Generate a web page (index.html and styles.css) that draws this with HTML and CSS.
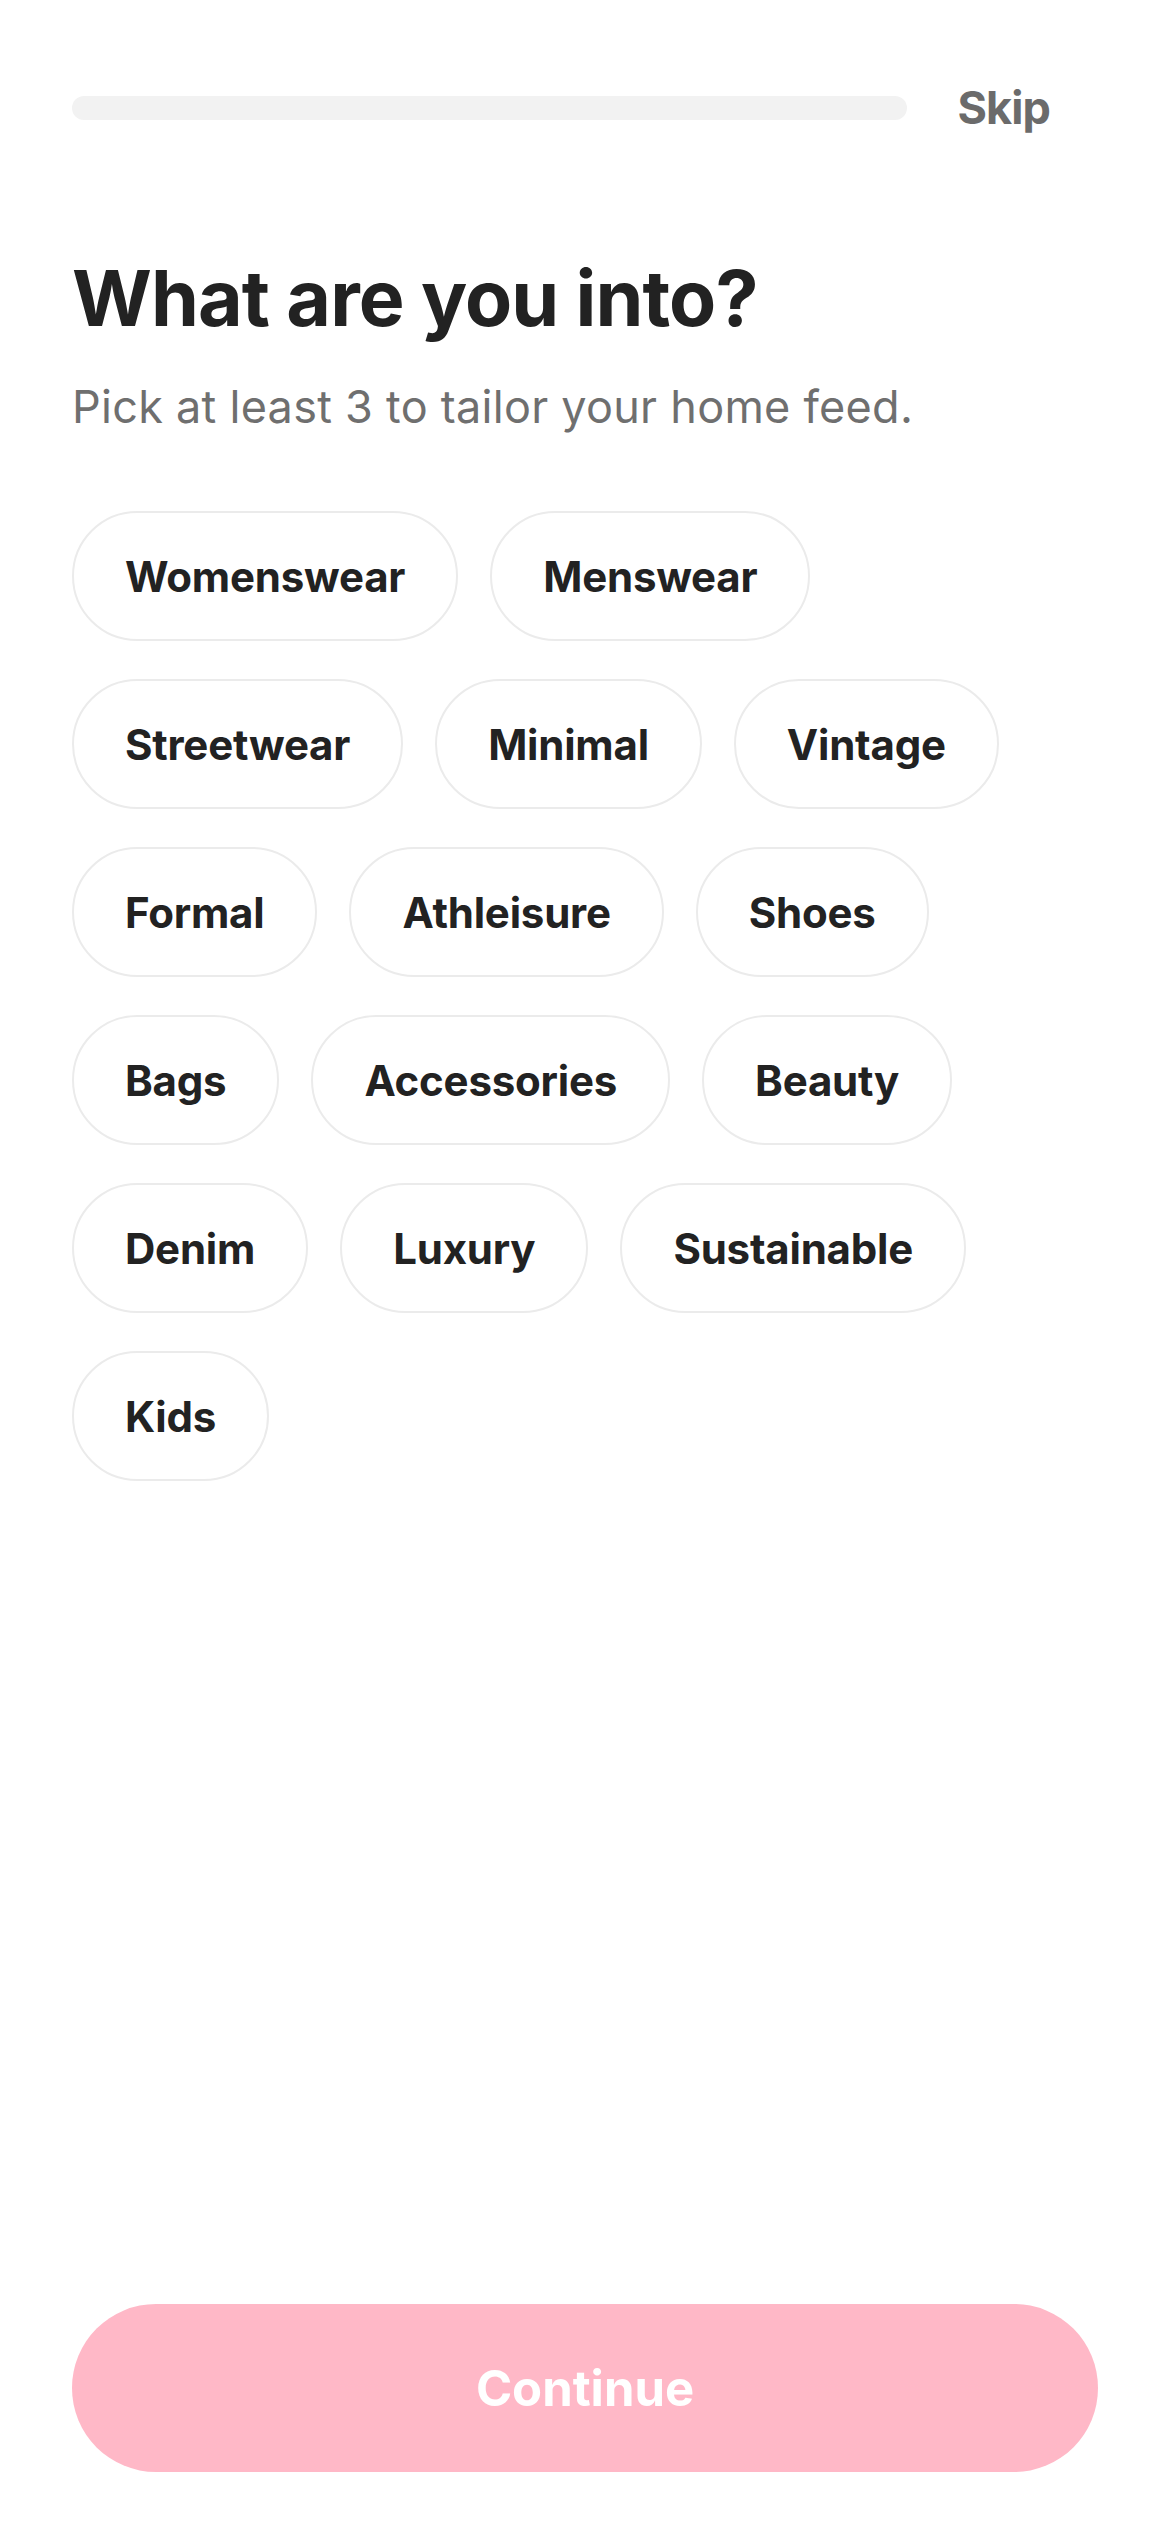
FILE: index.html
```html
<!DOCTYPE html>
<html lang="en">
<head>
  <meta charset="UTF-8" />
  <meta name="viewport" content="width=device-width, initial-scale=1.0"/>
  <title>What are you into?</title>
  <link rel="stylesheet" href="styles.css">
</head>
<body>
  <div class="top-bar">
    <div class="progress"><div class="progress-fill"></div></div>
    <button class="skip-btn">Skip</button>
  </div>

  <h1 class="title">What are you into?</h1>
  <p class="subtitle">Pick at least 3 to tailor your home feed.</p>

  <div class="chips" id="chips">
    <button class="chip">Womenswear</button>
    <button class="chip">Menswear</button>
    <button class="chip">Streetwear</button>
    <button class="chip">Minimal</button>
    <button class="chip">Vintage</button>
    <button class="chip">Formal</button>
    <button class="chip">Athleisure</button>
    <button class="chip">Shoes</button>
    <button class="chip">Bags</button>
    <button class="chip">Accessories</button>
    <button class="chip">Beauty</button>
    <button class="chip">Denim</button>
    <button class="chip">Luxury</button>
    <button class="chip">Sustainable</button>
    <button class="chip">Kids</button>
  </div>

  <button class="continue-btn" id="continueBtn" disabled>Continue</button>

  <script>
    const chips = document.querySelectorAll('.chip');
    const continueBtn = document.getElementById('continueBtn');

    chips.forEach(chip => {
      chip.addEventListener('click', () => {
        chip.classList.toggle('selected');
        const count = document.querySelectorAll('.chip.selected').length;
        continueBtn.disabled = count < 3;
      });
    });
  </script>
</body>
</html>
```

FILE: styles.css
```css
* {
  box-sizing: border-box;
}
body {
  margin: 0;
  min-height: 100vh;
  padding: 0 72px 60px;
  display: flex;
  flex-direction: column;
  background-color: #fff;
  color: #222;
  font-family: Inter, 'Noto Sans', sans-serif;
}
button {
  font-family: inherit;
  cursor: pointer;
}
.top-bar {
  display: flex;
  align-items: center;
  gap: 50px;
  padding-top: 84px;
  height: 132px;
}
.progress {
  flex: 1;
  height: 24px;
  border-radius: 12px;
  background-color: #f2f2f2;
  overflow: hidden;
}
.progress-fill {
  width: 0;
  height: 100%;
  background-color: #ff8fa6;
}
.skip-btn {
  background: none;
  border: none;
  padding: 0;
  margin-right: 48px;
  font-size: 45px;
  line-height: 48px;
  font-weight: 700;
  color: #6b6b6b;
  letter-spacing: -0.02em;
}
.title {
  margin: 120px 0 0;
  font-size: 77px;
  line-height: 92px;
  font-weight: 700;
  letter-spacing: -0.012em;
  color: #222;
}
.subtitle {
  margin: 35px 0 0;
  font-size: 45px;
  line-height: 56px;
  color: #6f6f6f;
  letter-spacing: 0.006em;
}
.chips {
  margin-top: 76px;
  display: flex;
  flex-wrap: wrap;
  column-gap: 32px;
  row-gap: 38px;
}
.chip {
  height: 130px;
  padding: 0 51px;
  border: 2px solid #ebebeb;
  border-radius: 65px;
  background-color: #fff;
  font-size: 42px;
  font-weight: 700;
  color: #222;
  letter-spacing: -0.005em;
}
.chip.selected {
  background-color: #222;
  border-color: #222;
  color: #fff;
}
.continue-btn {
  margin-top: auto;
  width: 100%;
  height: 168px;
  border: none;
  border-radius: 84px;
  background-color: #ff2d5a;
  color: #fff;
  font-size: 49px;
  font-weight: 700;
}
.continue-btn:disabled {
  background-color: #ffb8c7;
  cursor: default;
}
```
